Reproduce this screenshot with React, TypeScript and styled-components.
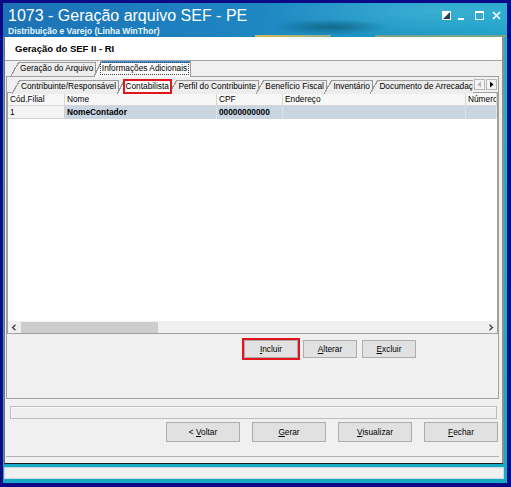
import React from 'react'
import styled, { createGlobalStyle, css } from 'styled-components'

const GlobalStyle = createGlobalStyle`
  html, body { margin: 0; padding: 0; background: #0a0a86; }
  body { font-family: "Liberation Sans", Arial, sans-serif; color: #000; }
  *, *::before, *::after { box-sizing: border-box; }
`

const Frame = styled.div`
  width: 511px;
  height: 487px;
  padding: 3px 4px 4px 3px;
  background: #0a0a86;
  display: flex;
  flex-direction: column;
`

const TitleBar = styled.div`
  flex: none;
  height: 34px;
  display: flex;
  justify-content: space-between;
  padding: 3px 6px 0 5px;
  background:
    linear-gradient(90deg, transparent 252px, rgba(235, 190, 70, .9) 252px, rgba(235, 200, 90, .55) 328px, transparent 328px, transparent 372px, rgba(215, 170, 70, .5) 372px) left bottom / 100% 2px no-repeat,
    radial-gradient(58px 8px at 328px 24px, rgba(12, 95, 125, .8), transparent),
    radial-gradient(170px 26px at 430px 8px, rgba(120, 220, 240, .3), transparent),
    linear-gradient(90deg, #1c72b6 0%, #1e84c1 45%, #1fa3c8 100%);
`

const TitleBlock = styled.div`
  display: flex;
  flex-direction: column;
`

const Title = styled.div`
  font-size: 16px;
  line-height: 19px;
  color: #fff;
  white-space: nowrap;
`

const Subtitle = styled.div`
  font-size: 8.5px;
  font-weight: bold;
  line-height: 11px;
  margin-top: 1px;
  color: #e4f6ff;
  white-space: nowrap;
`

const Controls = styled.div`
  display: flex;
  align-items: flex-start;
  padding-top: 5px;
`

const Ctl = styled.svg<{ $gap?: number }>`
  display: block;
  margin-left: ${p => p.$gap ?? 0}px;
`

const Client = styled.div`
  flex: 1;
  display: flex;
  flex-direction: column;
  padding: 0 3px 4px 1px;
  background: linear-gradient(#1fb3cb, #17a9c4);
`

const Form = styled.div`
  flex: none;
  height: 427px;
  display: flex;
  flex-direction: column;
  background: #f0f0f0;
  border-left: 1px solid #6f6f6f;
  border-right: 2px solid #8e8e8e;
  border-bottom: 1px solid #1b1b1b;
`

const Header = styled.div`
  flex: none;
  height: 24px;
  padding: 2px 0 0 10px;
  background: #fff;
  border-bottom: 1px solid #a3a3a3;
  font-size: 9.5px;
  font-weight: bold;
  line-height: 20px;
`

const Body = styled.div`
  flex: none;
  height: 396px;
  display: flex;
  flex-direction: column;
  margin: 0 3px 0 1px;
  border-bottom: 1px solid #b3b3b3;
`

const TabStrip = styled.div<{ $pad: number }>`
  flex: none;
  height: 15px;
  display: flex;
  align-items: flex-end;
  padding-left: ${p => p.$pad}px;
  position: relative;
  z-index: 1;
`

const TabViewport = styled.div`
  flex: 1;
  height: 17px;
  display: flex;
  align-items: flex-end;
  overflow: hidden;
  align-self: flex-start;
`

const tabBackground = (bg: string, accent?: boolean) => css`
  background:
    ${accent ? 'linear-gradient(#3f8fd8, #3f8fd8) 8px 0 / calc(100% - 8px) 2px no-repeat,' : ''}
    linear-gradient(to bottom right, transparent calc(50% - .7px), #9a9a9a calc(50% - .7px), #9a9a9a calc(50% + .5px), ${bg} calc(50% + .5px)) left top / 8px 100% no-repeat,
    linear-gradient(#9a9a9a, #9a9a9a) 8px 0 / calc(100% - 8px) 1px no-repeat,
    linear-gradient(${bg}, ${bg}) 8px 0 / calc(100% - 8px) 100% no-repeat;
`

const Tab = styled.div<{ $active?: boolean; $accent?: boolean }>`
  position: relative;
  flex: none;
  height: ${p => (p.$active ? 16 : 14)}px;
  margin-left: -2.5px;
  margin-bottom: ${p => (p.$active ? -1 : 0)}px;
  padding: ${p => (p.$active ? 2 : 1)}px 2px 0 9px;
  border-right: 1px solid #9a9a9a;
  font-size: 8.3px;
  line-height: 11px;
  white-space: nowrap;
  z-index: ${p => (p.$active ? 2 : 1)};
  ${p => tabBackground(p.$active ? '#fbfbfb' : '#ededed', p.$accent)}
  &:first-child { margin-left: 0; }
`

const FocusLabel = styled.span`
  display: inline-block;
  margin-left: -2px;
  padding: 0 1px;
  outline: 1px dotted #444;
  outline-offset: 0;
`

const RedMark = styled.span`
  position: absolute;
  left: 6px;
  right: -1px;
  top: 0;
  bottom: 1px;
  border: 2px solid #e3151c;
`

const ScrollButtons = styled.div`
  flex: none;
  display: flex;
  gap: 1px;
  margin: 0 1px 2px 1px;
`

const ScrollBtn = styled.div`
  width: 11px;
  height: 11px;
  border: 1px solid #b7b7b7;
  background: #f4f4f4;
  display: flex;
  align-items: center;
  justify-content: center;
`

const TabPage = styled.div`
  flex: none;
  height: 323px;
  display: flex;
  flex-direction: column;
  border: 1px solid #a0a0a0;
  background: #f0f0f0;
`

const InnerPage = styled.div`
  flex: none;
  height: 242px;
  display: flex;
  flex-direction: column;
  border: 1px solid #a0a0a0;
  background: #fff;
`

const GridRow = styled.div`
  display: grid;
  grid-template-columns: 57px 152px 66px 183px 1fr;
  height: 13px;
  flex: none;
`

const HeadCell = styled.div`
  padding-left: 2px;
  font-size: 8.3px;
  line-height: 13px;
  background: #f7f7f7;
  border-right: 1px solid #d6d6d6;
  border-bottom: 1px solid #d6d6d6;
  white-space: nowrap;
  overflow: hidden;
`

const Cell = styled.div<{ $fixed?: boolean }>`
  padding-left: 2px;
  font-size: 8.3px;
  line-height: 12px;
  white-space: nowrap;
  overflow: hidden;
  font-weight: ${p => (p.$fixed ? 'normal' : 'bold')};
  background: ${p => (p.$fixed ? '#f3f3f3' : '#c9d6e2')};
  border: 1px solid ${p => (p.$fixed ? '#cfcfcf' : '#dde4ea')};
  border-width: ${p => (p.$fixed ? '0 1px 1px 0' : '0 1px 0 0')};
`

const Filler = styled.div`
  flex: 1;
`

const HScroll = styled.div`
  flex: none;
  height: 12px;
  display: flex;
  align-items: center;
  background: #f0f0f0;
`

const ArrowBox = styled.div`
  width: 12px;
  height: 12px;
  display: flex;
  align-items: center;
  justify-content: center;
  flex: none;
`

const Thumb = styled.div`
  width: 137px;
  height: 11px;
  margin-left: 1px;
  background: #cdcdcd;
`

const ActionRow = styled.div<{ $left: number }>`
  flex: 1;
  display: flex;
  gap: 5px;
  padding: 6px 0 0 ${p => p.$left}px;
`

const Button = styled.button<{ $w: number; $h: number; $marked?: boolean }>`
  width: ${p => p.$w}px;
  height: ${p => p.$h}px;
  padding: 0;
  font-family: "Liberation Sans", Arial, sans-serif;
  font-size: 8.3px;
  color: #000;
  background: #e1e1e1;
  border: 1px solid #adadad;
  border-radius: 0;
  ${p => p.$marked && css`
    outline: 2px solid #e3151c;
    outline-offset: 0;
  `}
`

const Progress = styled.div`
  flex: none;
  height: 13px;
  margin: 7px 2px 0 4px;
  border: 1px solid #bdbdbd;
  background: #efefef;
  box-shadow: inset 1px 1px 0 #fafafa;
`

const FooterRow = styled.div`
  flex: none;
  display: flex;
  justify-content: flex-end;
  gap: 12px;
  margin-top: 3px;
  padding-right: 1px;
`

const StatusBar = styled.div`
  flex: none;
  height: 12px;
  margin-top: 3px;
  background: #f0f0f0;
  border: 1px solid #c6dde3;
`

const LeftArrow = ({ color }: { color: string }) => (
  <svg width="7" height="7" viewBox="0 0 7 7">
    <path d="M5 0.5 L1.5 3.5 L5 6.5 Z" fill={color} />
  </svg>
)

const RightArrow = ({ color }: { color: string }) => (
  <svg width="7" height="7" viewBox="0 0 7 7">
    <path d="M2 0.5 L5.5 3.5 L2 6.5 Z" fill={color} />
  </svg>
)

const Chevron = ({ dir }: { dir: 'l' | 'r' }) => (
  <svg width="6" height="7" viewBox="0 0 6 7">
    <path d={dir === 'l' ? 'M4.5 0.8 L1.6 3.5 L4.5 6.2' : 'M1.5 0.8 L4.4 3.5 L1.5 6.2'} stroke="#444" strokeWidth="1.4" fill="none" />
  </svg>
)

export default function App() {
  return (
    <>
      <GlobalStyle />
      <Frame>
        <TitleBar>
          <TitleBlock>
            <Title>1073 - Geração arquivo SEF - PE</Title>
            <Subtitle>Distribuição e Varejo (Linha WinThor)</Subtitle>
          </TitleBlock>
          <Controls>
            <Ctl width="9" height="9" viewBox="0 0 9 9">
              <rect x="0.5" y="0.5" width="8" height="8" fill="#1d3f66" stroke="#fff" />
              <path d="M0 0 H9 L0 9 Z" fill="#fff" />
            </Ctl>
            <Ctl $gap={6} width="8" height="9" viewBox="0 0 8 9">
              <rect x="1" y="7" width="6" height="2" fill="#fff" />
            </Ctl>
            <Ctl $gap={10} width="9" height="9" viewBox="0 0 9 9">
              <rect x="0.5" y="0.5" width="8" height="8" fill="none" stroke="#fff" />
              <rect x="0" y="0" width="9" height="2" fill="#fff" />
            </Ctl>
            <Ctl $gap={8} width="9" height="9" viewBox="0 0 9 9">
              <path d="M1 1 L8 8 M8 1 L1 8" stroke="#fff" strokeWidth="1.6" />
            </Ctl>
          </Controls>
        </TitleBar>

        <Client>
          <Form>
            <Header>Geração do SEF II - RI</Header>
            <Body>
              <TabStrip $pad={5}>
                <Tab>Geração do Arquivo</Tab>
                <Tab $active $accent><FocusLabel>Informações Adicionais</FocusLabel></Tab>
              </TabStrip>
              <TabPage>
                <TabStrip $pad={5}>
                  <TabViewport>
                    <Tab>Contribuinte/Responsável</Tab>
                    <Tab $active>Contabilista<RedMark /></Tab>
                    <Tab>Perfil do Contribuinte</Tab>
                    <Tab>Benefício Fiscal</Tab>
                    <Tab>Inventário</Tab>
                    <Tab>Documento de Arrecadação</Tab>
                  </TabViewport>
                  <ScrollButtons>
                    <ScrollBtn><LeftArrow color="#b5b5b5" /></ScrollBtn>
                    <ScrollBtn><RightArrow color="#000" /></ScrollBtn>
                  </ScrollButtons>
                </TabStrip>
                <InnerPage>
                  <GridRow>
                    <HeadCell>Cód.Filial</HeadCell>
                    <HeadCell>Nome</HeadCell>
                    <HeadCell>CPF</HeadCell>
                    <HeadCell>Endereço</HeadCell>
                    <HeadCell>Número</HeadCell>
                  </GridRow>
                  <GridRow>
                    <Cell $fixed>1</Cell>
                    <Cell>NomeContador</Cell>
                    <Cell>00000000000</Cell>
                    <Cell></Cell>
                    <Cell></Cell>
                  </GridRow>
                  <Filler />
                  <HScroll>
                    <ArrowBox><Chevron dir="l" /></ArrowBox>
                    <Thumb />
                    <Filler />
                    <ArrowBox><Chevron dir="r" /></ArrowBox>
                  </HScroll>
                </InnerPage>
                <ActionRow $left={237}>
                  <Button $w={54} $h={18} $marked><u>I</u>ncluir</Button>
                  <Button $w={54} $h={18}><u>A</u>lterar</Button>
                  <Button $w={54} $h={18}><u>E</u>xcluir</Button>
                </ActionRow>
              </TabPage>
              <Progress />
              <FooterRow>
                <Button $w={74} $h={20}>&lt; <u>V</u>oltar</Button>
                <Button $w={74} $h={20}><u>G</u>erar</Button>
                <Button $w={74} $h={20}><u>V</u>isualizar</Button>
                <Button $w={74} $h={20}><u>F</u>echar</Button>
              </FooterRow>
            </Body>
          </Form>
          <StatusBar />
        </Client>
      </Frame>
    </>
  )
}
